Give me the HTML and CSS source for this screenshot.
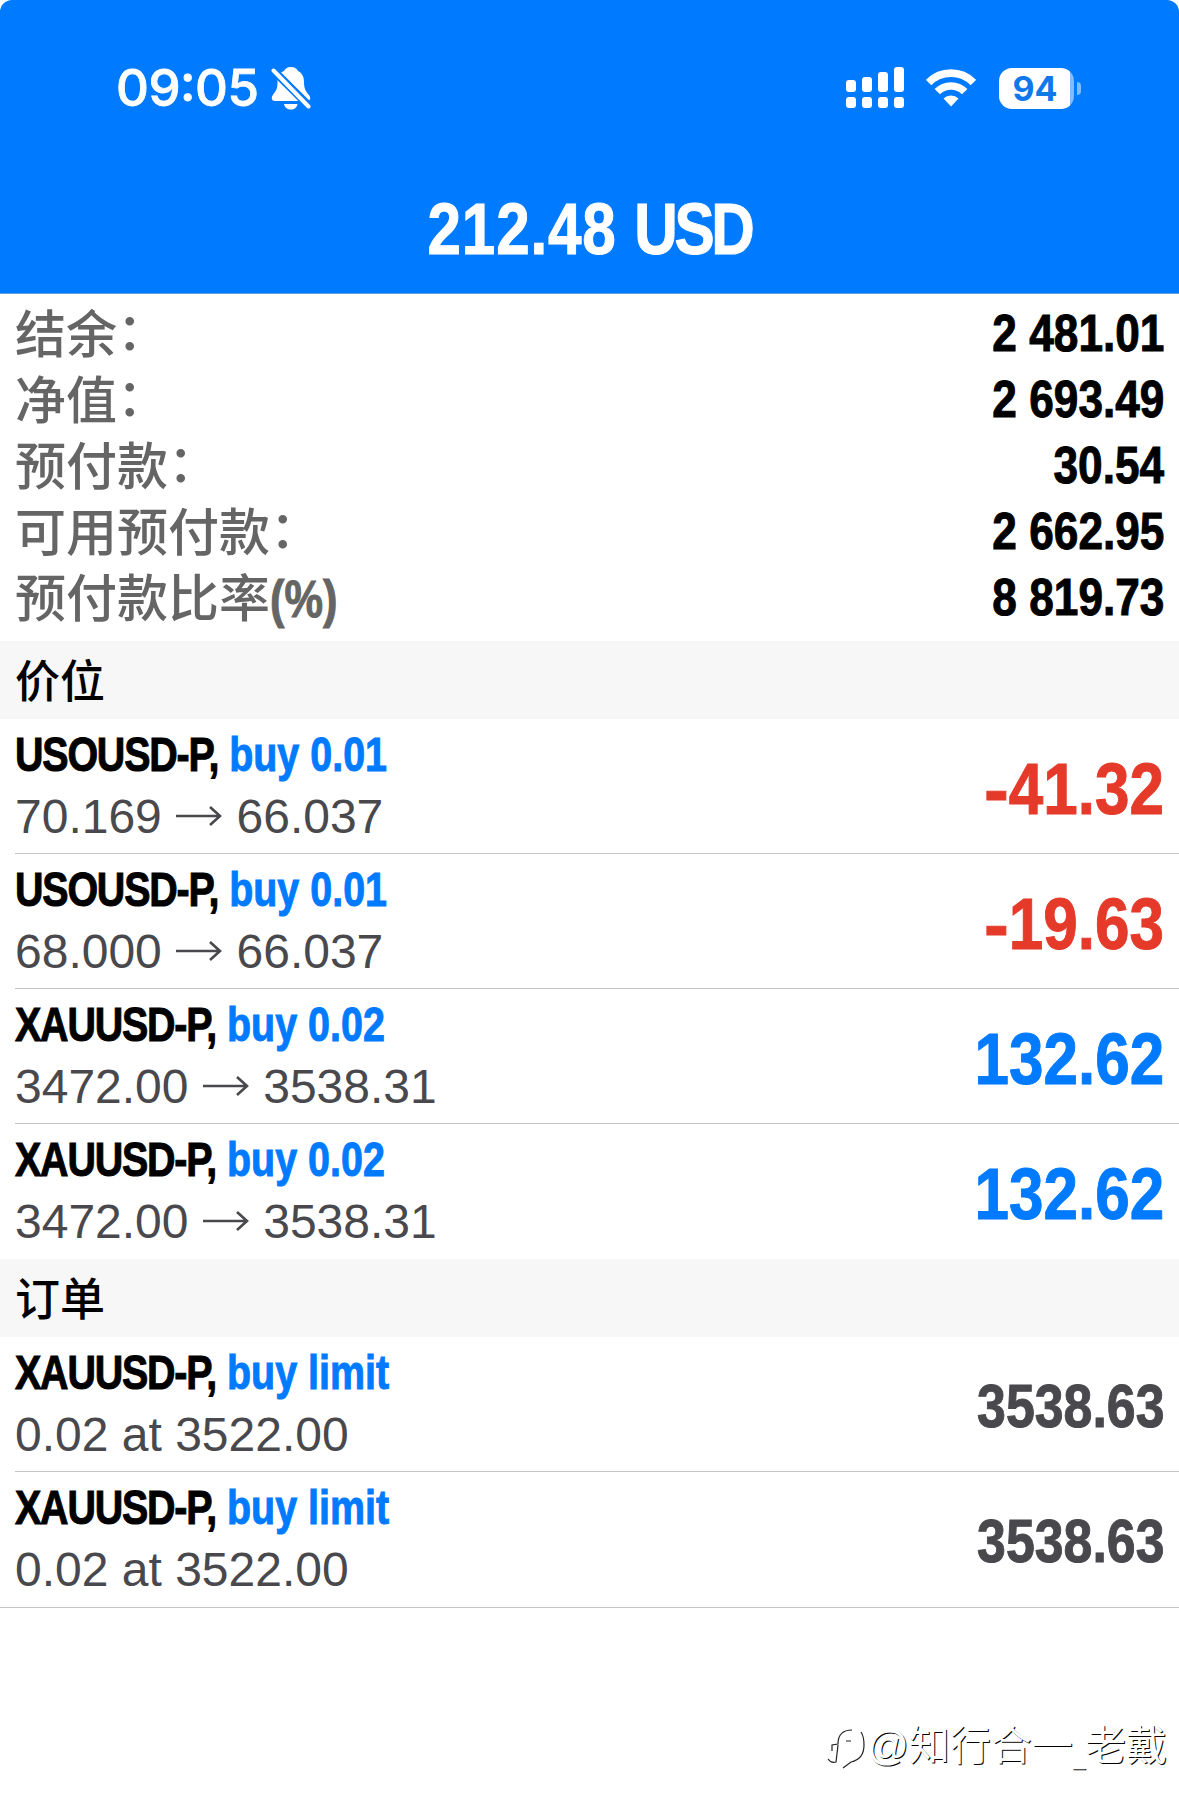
FILE: index.html
```html
<!DOCTYPE html>
<html lang="zh-CN">
<head>
  <meta charset="UTF-8" />
  <meta name="viewport" content="width=device-width, initial-scale=1.0"/>
  <title>212.48 USD</title>
  <link rel="stylesheet" href="styles.css">
</head>
<body>

  <header class="header">
    <div class="status-bar">
      <span class="time">09:05</span>
      <svg class="bell" width="40" height="44" viewBox="0 0 40 44">
        <path fill="#fff" d="M20 1c-4 0-6 1.800-7 4C8 7 6.500 11 6.500 16c0 7-1.500 9-4 12C0 31 0 35 4 35h32c4 0 4-4 1.500-6.500C34.500 25 33 22 33 16c0-5-2-9-6-11-1-2.200-3-4-7-4zM13 38h13.500c-.5 3.500-3 5.500-6.500 5.500S13.500 41.500 13 38z"/>
        <path stroke="#007aff" stroke-width="8" d="M-2 0l44 44"/>
        <path stroke="#fff" stroke-width="4" stroke-linecap="round" d="M2.500 4.500l35 36"/>
      </svg>
      <div class="status-icons">
        <svg class="signal" width="58" height="42" viewBox="0 0 58 42" fill="#fff">
          <rect x="0" y="13" width="10" height="12" rx="3"/>
          <rect x="16" y="10" width="10" height="15" rx="3"/>
          <rect x="32" y="5" width="10" height="20" rx="3"/>
          <rect x="48" y="0" width="10" height="25" rx="3"/>
          <rect x="0" y="30" width="10" height="11" rx="3"/>
          <rect x="16" y="30" width="10" height="11" rx="3"/>
          <rect x="32" y="30" width="10" height="11" rx="3"/>
          <rect x="48" y="30" width="10" height="11" rx="3"/>
        </svg>
        <svg class="wifi" width="50" height="38" viewBox="0 0 50 38">
          <path fill="none" stroke="#fff" stroke-width="7.600" d="M2.600 13.500a31.500 31.500 0 0 1 44.800 0M11.300 22.700a19.200 19.200 0 0 1 27.400 0"/>
          <path fill="#fff" d="M17.500 29.500a10.800 10.800 0 0 1 15 0L25 37.500z"/>
        </svg>
        <div class="battery"><span>94</span></div>
        <div class="battery-cap"></div>
      </div>
    </div>
    <h1>212.48 <span>USD</span></h1>
  </header>

  <dl class="account">
    <div class="account-row"><dt>结余<span class="colon">：</span></dt><dd>2 481.01</dd></div>
    <div class="account-row"><dt>净值<span class="colon">：</span></dt><dd>2 693.49</dd></div>
    <div class="account-row"><dt>预付款<span class="colon">：</span></dt><dd>30.54</dd></div>
    <div class="account-row"><dt>可用预付款<span class="colon">：</span></dt><dd>2 662.95</dd></div>
    <div class="account-row"><dt>预付款比率<span class="percent">(%)</span></dt><dd>8 819.73</dd></div>
  </dl>

  <h2>价位</h2>
  <ul class="list">
    <li>
      <div>
        <div class="symbol"><b>USOUSD-P,</b> <span>buy 0.01</span></div>
        <div class="detail">70.169 <svg class="arrow" viewBox="0 0 46 20"><path d="M0 10h44M34 1l10 9-10 9"/></svg> 66.037</div>
      </div>
      <div class="profit loss"><span>-</span>41.32</div>
    </li>
    <li>
      <div>
        <div class="symbol"><b>USOUSD-P,</b> <span>buy 0.01</span></div>
        <div class="detail">68.000 <svg class="arrow" viewBox="0 0 46 20"><path d="M0 10h44M34 1l10 9-10 9"/></svg> 66.037</div>
      </div>
      <div class="profit loss"><span>-</span>19.63</div>
    </li>
    <li>
      <div>
        <div class="symbol"><b>XAUUSD-P,</b> <span>buy 0.02</span></div>
        <div class="detail">3472.00 <svg class="arrow" viewBox="0 0 46 20"><path d="M0 10h44M34 1l10 9-10 9"/></svg> 3538.31</div>
      </div>
      <div class="profit">132.62</div>
    </li>
    <li>
      <div>
        <div class="symbol"><b>XAUUSD-P,</b> <span>buy 0.02</span></div>
        <div class="detail">3472.00 <svg class="arrow" viewBox="0 0 46 20"><path d="M0 10h44M34 1l10 9-10 9"/></svg> 3538.31</div>
      </div>
      <div class="profit">132.62</div>
    </li>
  </ul>

  <h2>订单</h2>
  <ul class="list orders">
    <li>
      <div>
        <div class="symbol"><b>XAUUSD-P,</b> <span>buy limit</span></div>
        <div class="detail">0.02 at 3522.00</div>
      </div>
      <div class="price">3538.63</div>
    </li>
    <li>
      <div>
        <div class="symbol"><b>XAUUSD-P,</b> <span>buy limit</span></div>
        <div class="detail">0.02 at 3522.00</div>
      </div>
      <div class="price">3538.63</div>
    </li>
  </ul>

  <footer class="watermark">
    <svg width="40" height="52" viewBox="0 0 40 52" fill="none" stroke="#222" stroke-width="1.200">
      <path d="M1 42c2 3 5 4 8 3l2-17M5 34v-6l6-1c0-9 5-14 14-14M19 24h5"/>
      <path d="M34 15c2 3 3 7 3 13 0 10-4 15-13 17l-8 6"/>
    </svg>
    <span><span class="at">@</span>知行合一<span class="underscore">_</span>老戴</span>
  </footer>

</body>
</html>
```

FILE: styles.css
```css
* {
  box-sizing: border-box;
  margin: 0;
  padding: 0;
}

body {
  width: 1179px;
  height: 1816px;
  overflow: hidden;
  background: #fff;
  color: #000;
  font-family: 'Liberation Sans', 'Noto Sans CJK SC', sans-serif;
}

.header {
  height: 294px;
  background: #007aff;
  border-bottom: 1px solid #5d9fe0;
  border-radius: 12px 12px 0 0;
  color: #fff;
}

.status-bar {
  display: flex;
  align-items: center;
  height: 176px;
  padding: 0 98px 0 116px;
}

.time {
  width: 142px;
  font: 500 51px/60px 'Inter', sans-serif;
  font-feature-settings: 'case';
  letter-spacing: -0.5px;
  white-space: nowrap;
  -webkit-text-stroke: 0.8px #fff;
}

.bell {
  margin-left: 13px;
}

.status-icons {
  display: flex;
  align-items: center;
  margin-left: auto;
}

.wifi {
  margin-left: 22px;
}

.battery {
  width: 75px;
  height: 41px;
  margin-left: 23px;
  border-radius: 13px;
  background: linear-gradient(to right, #fff 71px, #80bcff 71px);
  color: #0f78ea;
  text-align: center;
  font: 700 34px/41px 'Inter', sans-serif;
}

.battery span {
  margin-right: 3px;
}

.battery-cap {
  width: 4px;
  height: 13px;
  margin-left: 3px;
  border-radius: 0 4px 4px 0;
  background: #80bcff;
}

/* condensed bold */
h1,
dd,
.percent,
.symbol,
.profit,
.price {
  font-family: 'Liberation Sans', sans-serif;
  font-weight: 700;
  white-space: nowrap;
  -webkit-text-stroke: 1px;
}

h1 {
  font-size: 73px;
  line-height: 105px;
  text-align: center;
  letter-spacing: 1px;
  transform: scaleX(0.825);
}

h1 span {
  letter-spacing: -4px;
}

.account {
  height: 347px;
  padding: 6px 15px 0;
}

.account-row {
  display: flex;
  justify-content: space-between;
  height: 66px;
  line-height: 66px;
}

dt {
  color: #656565;
  font-size: 51px;
  font-weight: 500;
  font-family: 'Noto Sans CJK SC', sans-serif;
  line-height: 62px;
}

.colon {
  line-height: 1;
  vertical-align: 3px;
}

.percent {
  display: inline-block;
  line-height: 1;
  transform: scaleX(0.85);
  transform-origin: left;
}

dd {
  font-size: 52px;
  transform: scaleX(0.85);
  transform-origin: right;
}

h2 {
  height: 78px;
  padding-left: 15px;
  background: #f7f7f7;
  font: 500 45px/75px 'Noto Sans CJK SC', sans-serif;
}

.list {
  list-style: none;
}

.list li {
  display: flex;
  justify-content: space-between;
  height: 135px;
  margin-left: 15px;
  padding-right: 15px;
  border-bottom: 1px solid #c5c5c7;
}

.list li:last-child {
  border-bottom: none;
}

.orders li:last-child {
  height: 136px;
  margin-left: 0;
  padding-left: 15px;
  border-bottom: 1px solid #c5c5c7;
}

.symbol {
  padding-top: 4px;
  font-size: 49px;
  line-height: 62px;
  transform: scaleX(0.805);
  transform-origin: left;
}

.symbol b {
  letter-spacing: -1.5px;
}

.symbol span {
  color: #007aff;
}

.detail {
  color: #48484d;
  font-size: 48px;
  line-height: 64px;
}

.arrow {
  width: 46px;
  height: 20px;
  margin: 0 1px;
  vertical-align: 7px;
  fill: none;
  stroke: #48484d;
  stroke-width: 2.600;
}

.profit {
  color: #007aff;
  font-size: 73px;
  line-height: 139px;
  transform: scaleX(0.85);
  transform-origin: right;
}

.loss {
  color: #e53a2a;
}

.loss span {
  display: inline-block;
  transform: scaleX(1.2);
  transform-origin: right;
}

.price {
  color: #48484d;
  font-size: 61px;
  line-height: 139px;
  transform: scaleX(0.85);
  transform-origin: right;
}

.watermark {
  display: flex;
  justify-content: flex-end;
  margin-top: 109px;
  padding-right: 12px;
  color: #fff;
  font: 400 41px/50px 'Noto Sans CJK SC', sans-serif;
  text-shadow: 1px 1px 0 #000;
}

.at {
  font-family: 'Liberation Sans', sans-serif;
}

.underscore {
  font-family: 'Liberation Sans', sans-serif;
  font-size: 22px;
  line-height: 1;
  vertical-align: -5px;
}
```
